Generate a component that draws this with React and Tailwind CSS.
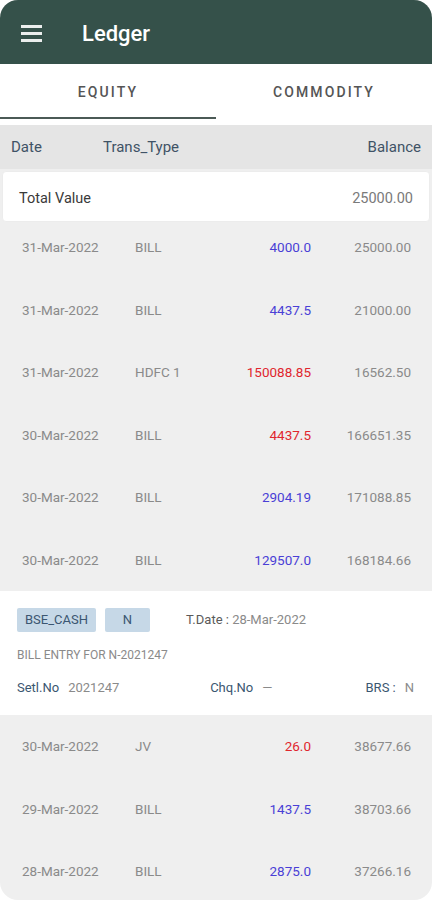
import React from 'react';

const rowsTop = [
  { date: '31-Mar-2022', type: 'BILL', amount: '4000.0', credit: true, balance: '25000.00' },
  { date: '31-Mar-2022', type: 'BILL', amount: '4437.5', credit: true, balance: '21000.00' },
  { date: '31-Mar-2022', type: 'HDFC 1', amount: '150088.85', credit: false, balance: '16562.50' },
  { date: '30-Mar-2022', type: 'BILL', amount: '4437.5', credit: false, balance: '166651.35' },
  { date: '30-Mar-2022', type: 'BILL', amount: '2904.19', credit: true, balance: '171088.85' },
  { date: '30-Mar-2022', type: 'BILL', amount: '129507.0', credit: true, balance: '168184.66' },
];

const rowsBottom = [
  { date: '30-Mar-2022', type: 'JV', amount: '26.0', credit: false, balance: '38677.66' },
  { date: '29-Mar-2022', type: 'BILL', amount: '1437.5', credit: true, balance: '38703.66' },
  { date: '28-Mar-2022', type: 'BILL', amount: '2875.0', credit: true, balance: '37266.16' },
];

const LedgerRow = ({ row }) => (
  <div className="h-[62.5px] flex items-center text-[13.5px] text-[#8a8a8a]">
    <span className="w-[135px] pl-[22px]">{row.date}</span>
    <span className="w-[80px]">{row.type}</span>
    <span className={`w-[96px] text-right ${row.credit ? 'text-[#4a3fd6]' : 'text-[#e0262e]'}`}>
      {row.amount}
    </span>
    <span className="w-[100px] text-right">{row.balance}</span>
  </div>
);

export default function App() {
  return (
    <div className="bg-white w-[432px] h-[900px]" style={{ fontFamily: 'Roboto, "Liberation Sans", sans-serif' }}>
      <div className="h-[900px] rounded-[18px] overflow-hidden bg-[#efefef] flex flex-col">
        {/* App bar */}
        <div className="h-[64px] bg-[#35514a] flex items-center pt-[3px] shrink-0">
          <div className="ml-[21px] w-[21px] flex flex-col gap-[4px]">
            <span className="h-[3px] bg-white/90 block" />
            <span className="h-[3px] bg-white/90 block" />
            <span className="h-[3px] bg-white/90 block" />
          </div>
          <span className="ml-[40px] text-white text-[22px] font-medium">Ledger</span>
        </div>

        {/* Tabs */}
        <div className="bg-white h-[61px] shrink-0 flex flex-col">
          <div className="flex h-[52.5px] items-center pt-[5px] text-[14px] font-medium tracking-[0.15em] text-[#555]">
            <div className="w-1/2 text-center">EQUITY</div>
            <div className="w-1/2 text-center">COMMODITY</div>
          </div>
          <div className="w-1/2 h-[2.5px] bg-[#4b5a56]" />
        </div>

        {/* Column header */}
        <div className="h-[44px] bg-[#e5e5e5] flex items-center justify-between px-[11px] text-[15px] text-[#3f5366] shrink-0">
          <div className="flex">
            <span className="w-[92px]">Date</span>
            <span>Trans_Type</span>
          </div>
          <span>Balance</span>
        </div>

        {/* Total value */}
        <div className="bg-[#efefef] pt-[2px] shrink-0">
          <div className="mx-[2px] h-[51px] bg-white rounded-[4px] border border-[#ececec] flex items-center justify-between px-[16px] pt-[4px] text-[14.5px]">
            <span className="text-[#3a3a3a]">Total Value</span>
            <span className="text-[#7a7a7a]">25000.00</span>
          </div>
        </div>

        {/* List */}
        <div className="flex-1 overflow-hidden">
          <div className="-mt-[6px]">
            {rowsTop.map((r, i) => (
              <LedgerRow key={i} row={r} />
            ))}

            {/* Expanded detail */}
            <div className="bg-white h-[124px] px-[17px] pt-[17px]">
              <div className="flex items-center">
                <span className="h-[24px] w-[79px] flex items-center justify-center bg-[#c6d8e7] text-[#3b5671] text-[13px] rounded-[2px]">
                  BSE_CASH
                </span>
                <span className="ml-[9px] h-[24px] w-[45px] flex items-center justify-center bg-[#c6d8e7] text-[#3b5671] text-[13px] rounded-[2px]">
                  N
                </span>
                <span className="ml-[36px] text-[13px] text-[#5a5a5a]">
                  T.Date : <span className="text-[#8a8a8a]">28-Mar-2022</span>
                </span>
              </div>
              <div className="mt-[14px] text-[12px] text-[#8a8a8a]">BILL ENTRY FOR N-2021247</div>
              <div className="mt-[14px] flex items-center text-[13px]">
                <span className="text-[#3b5671]">Setl.No</span>
                <span className="ml-[9px] text-[#8a8a8a] w-[142px]">2021247</span>
                <span className="text-[#3b5671]">Chq.No</span>
                <span className="ml-[9px] text-[#8a8a8a]">—</span>
                <span className="ml-auto text-[#3b5671]">BRS :</span>
                <span className="ml-[9px] text-[#8a8a8a] pr-[1px]">N</span>
              </div>
            </div>

            {rowsBottom.map((r, i) => (
              <LedgerRow key={i} row={r} />
            ))}
          </div>
        </div>
      </div>
    </div>
  );
}
